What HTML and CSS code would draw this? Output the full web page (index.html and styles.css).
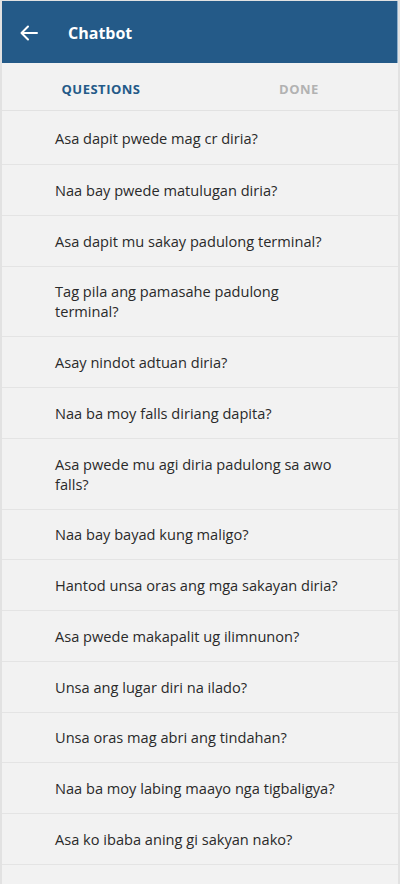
FILE: index.html
```html
<!DOCTYPE html>
<html lang="ceb">
<head>
<meta charset="utf-8">
<title>Chatbot</title>
<link rel="stylesheet" href="styles.css">
</head>
<body>
<div class="frame">
  <header class="appbar">
    <button class="back" aria-label="Back">
      <svg width="18" height="16" viewBox="0 0 18 16" fill="none" stroke="#fff" stroke-width="2" stroke-linecap="round" stroke-linejoin="round"><path d="M17 8H2M8 1.5 1.5 8 8 14.5"/></svg>
    </button>
    <h1 class="title">Chatbot</h1>
  </header>
  <nav class="tabs">
    <div class="tab active">QUESTIONS</div>
    <div class="tab">DONE</div>
  </nav>
  <ul class="list">
    <li class="item">Asa dapit pwede mag cr diria?</li>
    <li class="item">Naa bay pwede matulugan diria?</li>
    <li class="item">Asa dapit mu sakay padulong terminal?</li>
    <li class="item">Tag pila ang pamasahe padulong terminal?</li>
    <li class="item">Asay nindot adtuan diria?</li>
    <li class="item">Naa ba moy falls diriang dapita?</li>
    <li class="item">Asa pwede mu agi diria padulong sa awo falls?</li>
    <li class="item">Naa bay bayad kung maligo?</li>
    <li class="item">Hantod unsa oras ang mga sakayan diria?</li>
    <li class="item">Asa pwede makapalit ug ilimnunon?</li>
    <li class="item">Unsa ang lugar diri na ilado?</li>
    <li class="item">Unsa oras mag abri ang tindahan?</li>
    <li class="item">Naa ba moy labing maayo nga tigbaligya?</li>
    <li class="item">Asa ko ibaba aning gi sakyan nako?</li>
  </ul>
</div>
</body>
</html>
```
FILE: styles.css
```css
* { box-sizing: border-box; }
html, body { margin: 0; padding: 0; background: #f2f2f2; }
body {
  font-family: "Open Sans", "Noto Sans", "Liberation Sans", sans-serif;
  color: #2a2a2a;
}
.frame {
  width: 400px;
  min-height: 884px;
  border-left: 2px solid #e2e2e2;
  border-right: 2px solid #e2e2e2;
  border-top: 1px solid #e2e2e2;
  background: #f2f2f2;
}
.appbar {
  height: 62px;
  background: #245a88;
  display: flex;
  align-items: center;
  border-right: 1px solid #8fb0cc;
  padding-top: 2px;
}
.back {
  background: none;
  border: 0;
  padding: 0;
  margin-left: 17px;
  width: 20px;
  height: 20px;
  display: flex;
  align-items: center;
  justify-content: center;
}
.title {
  margin: 0 0 0 29px;
  font-size: 16px;
  font-weight: 700;
  color: #fff;
}
.tabs {
  display: grid;
  grid-template-columns: 1fr 1fr;
  height: 48px;
  padding-top: 4px;
  border-bottom: 1px solid #e2e2e2;
}
.tab {
  display: flex;
  align-items: center;
  justify-content: center;
  font-size: 13px;
  font-weight: 700;
  letter-spacing: 0.5px;
  color: #b2b2b2;
}
.tab.active { color: #245a88; }
.list { list-style: none; margin: 0; padding: 0; }
.item {
  padding: 14.88px 57px 14.88px 53px;
  font-size: 14.6px;
  line-height: 20px;
  border-bottom: 1px solid #e4e4e4;
}
.item:first-child { padding-top: 17px; padding-bottom: 16px; }
```
